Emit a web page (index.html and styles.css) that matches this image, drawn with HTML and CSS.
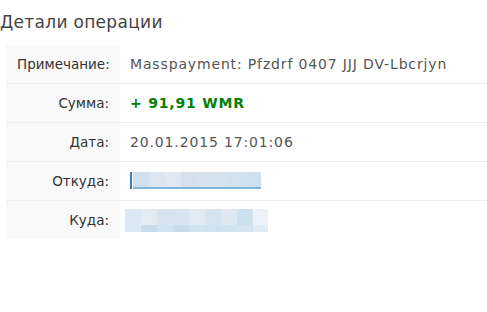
FILE: index.html
```html
<!DOCTYPE html>
<html lang="ru">
<head>
  <meta charset="UTF-8">
  <title>Детали операции</title>
  <link rel="stylesheet" href="styles.css">
</head>
<body>

  <h2 class="title">Детали операции</h2>

  <table class="details">
    <tr>
      <th>Примечание:</th>
      <td>Masspayment: Pfzdrf 0407 JJJ DV-Lbcrjyn</td>
    </tr>
    <tr>
      <th>Сумма:</th>
      <td class="amount">+ 91,91 WMR</td>
    </tr>
    <tr>
      <th>Дата:</th>
      <td>20.01.2015 17:01:06</td>
    </tr>
    <tr>
      <th>Откуда:</th>
      <td>
        <!-- wallet hidden -->
        <a class="wallet" href="#">
          <svg width="131" height="18" viewBox="0 0 131 18">
            <rect x="0" y="0" width="2" height="17" fill="#3a7fc4"/>
            <rect x="3" y="0" width="16" height="16" fill="#d0e0ee"/>
            <rect x="19" y="0" width="16" height="16" fill="#dbe6f0"/>
            <rect x="35" y="0" width="16" height="16" fill="#e0e9f3"/>
            <rect x="51" y="0" width="16" height="16" fill="#d4e0ec"/>
            <rect x="67" y="0" width="16" height="16" fill="#d6e3ef"/>
            <rect x="83" y="0" width="16" height="16" fill="#d5e3ef"/>
            <rect x="99" y="0" width="16" height="16" fill="#d1e1ee"/>
            <rect x="115" y="0" width="16" height="16" fill="#d0e0ee"/>
            <rect x="3" y="15" width="128" height="2" fill="#7fb4dc"/>
          </svg>
        </a>
      </td>
    </tr>
    <tr>
      <th>Куда:</th>
      <td class="to">
        <svg width="143" height="23" viewBox="0 0 143 23">
          <rect x="0" y="0" width="16" height="16" fill="#dce8f3"/>
          <rect x="16" y="0" width="16" height="16" fill="#e3ebf3"/>
          <rect x="32" y="0" width="16" height="16" fill="#d7e4f0"/>
          <rect x="48" y="0" width="16" height="16" fill="#d8e4f0"/>
          <rect x="64" y="0" width="16" height="16" fill="#e2eaf3"/>
          <rect x="80" y="0" width="16" height="16" fill="#d6e4f0"/>
          <rect x="96" y="0" width="16" height="16" fill="#dfe8f1"/>
          <rect x="112" y="0" width="16" height="16" fill="#cde0ef"/>
          <rect x="128" y="0" width="15" height="16" fill="#edf2f9"/>
          <rect x="0" y="16" width="16" height="7" fill="#dce8f3"/>
          <rect x="16" y="16" width="16" height="7" fill="#c8dcee"/>
          <rect x="32" y="16" width="16" height="7" fill="#d0e2f0"/>
          <rect x="48" y="16" width="16" height="7" fill="#c8dcee"/>
          <rect x="64" y="16" width="16" height="7" fill="#d2e3f0"/>
          <rect x="80" y="16" width="16" height="7" fill="#d0e2f0"/>
          <rect x="96" y="16" width="16" height="7" fill="#d2e3f0"/>
          <rect x="112" y="16" width="16" height="7" fill="#d4e4f1"/>
          <rect x="128" y="16" width="15" height="7" fill="#e0ebf5"/>
        </svg>
      </td>
    </tr>
  </table>

</body>
</html>
```

FILE: styles.css
```css
body {
  margin: 0;
  font-family: "DejaVu Sans", Verdana, sans-serif;
  background-color: #fff;
  color: #555;
}
.title {
  font-size: 17px;
  font-weight: normal;
  letter-spacing: 0.3px;
  color: #444;
  margin: 0;
  padding: 12px 0 0 0;
  line-height: 20px;
}
.details {
  margin: 13px 0 0 6px;
  width: 481px;
  border-collapse: collapse;
  table-layout: fixed;
}
.details th {
  width: 92px;
  height: 38px;
  padding: 0 11px;
  background-color: #f9f9f9;
  text-align: right;
  font-size: 13.5px;
  font-weight: normal;
  color: #333;
  border-bottom: 1px solid #eee;
  white-space: nowrap;
}
.details td {
  padding: 0 10px;
  height: 38px;
  font-size: 14px;
  letter-spacing: 0.85px;
  border-bottom: 1px solid #eee;
  white-space: nowrap;
}
.details tr:last-child th,
.details tr:last-child td {
  border-bottom: none;
}
.details .amount {
  color: #008000;
  font-weight: bold;
  letter-spacing: 0.8px;
}
.wallet {
  display: inline-block;
  vertical-align: middle;
}
.wallet svg,
.details .to svg {
  display: block;
}
.details .to {
  padding-left: 5px;
}
```
